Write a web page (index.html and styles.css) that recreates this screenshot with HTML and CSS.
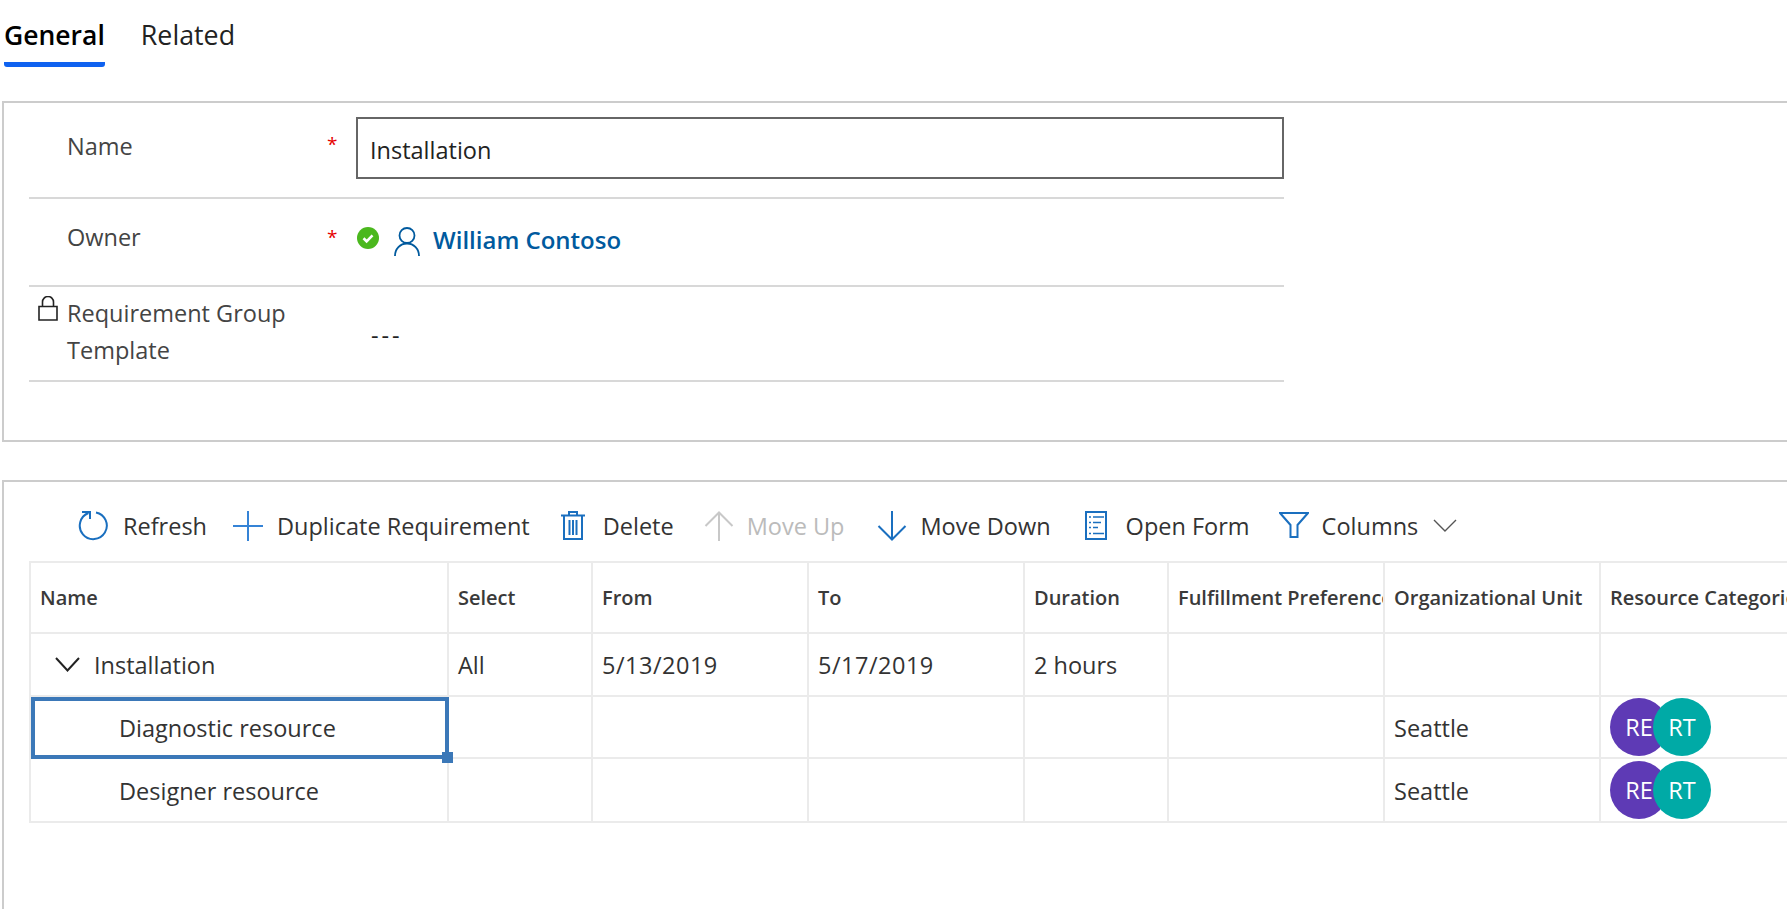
FILE: index.html
```html
<!DOCTYPE html>
<html lang="en">
<head>
<meta charset="utf-8">
<title>Requirement Group</title>
<link rel="stylesheet" href="styles.css">
</head>
<body>
<nav class="tabs">
  <a class="tab tab-active">General</a>
  <a class="tab">Related</a>
</nav>

<section class="panel panel-form">
  <div class="form-row row-name">
    <span class="lock-cell"></span>
    <label class="label">Name</label>
    <span class="req">*</span>
    <div class="input">Installation</div>
  </div>
  <div class="form-row row-owner">
    <span class="lock-cell"></span>
    <label class="label">Owner</label>
    <span class="req">*</span>
    <div class="owner">
      <svg class="ic-status" viewBox="0 0 22 22"><circle cx="11" cy="11" r="11" fill="#4bb81e"/><path d="M6.500 11.300l3.100 3 5.900-6" fill="none" stroke="#fff" stroke-width="2.600"/></svg>
      <svg class="ic-person" viewBox="0 0 26 29"><circle cx="13" cy="8.500" r="7.500" fill="none" stroke="#005a9e" stroke-width="1.800"/><path d="M1 29c0-7 5-12.500 12-12.500S25 22 25 29" fill="none" stroke="#005a9e" stroke-width="1.800"/></svg>
      <a class="owner-link">William Contoso</a>
    </div>
  </div>
  <div class="form-row row-template">
    <span class="lock-cell">
      <svg class="ic-lock" viewBox="0 0 20 25"><path d="M1 10.500h18V24H1zM4.500 10.500V6a5.500 5.500 0 0 1 11 0v4.500" fill="none" stroke="#222" stroke-width="1.600"/></svg>
    </span>
    <label class="label">Requirement Group<br>Template</label>
    <span class="req"></span>
    <div class="empty-value">---</div>
  </div>
</section>

<section class="panel panel-grid">
  <div class="toolbar">
    <button class="cmd cmd-refresh">
      <svg class="ic ic-30" viewBox="0 0 30 30"><path d="M18 1.400A13.500 13.500 0 1 1 10.500 2" fill="none" stroke="#1a6fbf" stroke-width="2"/><path d="M4 1h8v7" fill="none" stroke="#1a6fbf" stroke-width="2"/></svg>
      <span>Refresh</span>
    </button>
    <button class="cmd cmd-dup">
      <svg class="ic ic-30" viewBox="0 0 30 30"><path d="M15 0v30M0 15h30" fill="none" stroke="#3583d6" stroke-width="2"/></svg>
      <span>Duplicate Requirement</span>
    </button>
    <button class="cmd cmd-del">
      <svg class="ic ic-24" viewBox="0 0 24 30"><path d="M0 4.500h24M8 4.500V1h8v3.500M3 4.500V28h18V4.500M8.500 9v15M12 9v15M15.500 9v15" fill="none" stroke="#1a6fbf" stroke-width="2"/></svg>
      <span>Delete</span>
    </button>
    <button class="cmd cmd-off">
      <svg class="ic ic-30" viewBox="0 0 30 30"><path d="M15 30V1.500M1.500 15L15 1.500 28.500 15" fill="none" stroke="#c8c8c8" stroke-width="2"/></svg>
      <span>Move Up</span>
    </button>
    <button class="cmd cmd-down">
      <svg class="ic ic-30" viewBox="0 0 30 30"><path d="M15 0v28.500M1.500 15L15 28.500 28.500 15" fill="none" stroke="#1a6fbf" stroke-width="2"/></svg>
      <span>Move Down</span>
    </button>
    <button class="cmd cmd-form">
      <svg class="ic ic-22" viewBox="0 0 22 30"><path d="M1 1h20v27H1z" fill="none" stroke="#1a6fbf" stroke-width="2"/><path d="M4 6h2M8 6h11M4 11.500h2M8 11.500h8M4 16.500h2M8 16.500h5M4 22.500h2M8 22.500h11" fill="none" stroke="#1a6fbf" stroke-width="1.500"/></svg>
      <span>Open Form</span>
    </button>
    <button class="cmd cmd-cols">
      <svg class="ic ic-30" viewBox="0 0 30 30"><path d="M1 2h28L18.500 14v12h-7V14z" fill="none" stroke="#1a6fbf" stroke-width="2"/></svg>
      <span>Columns</span>
      <svg class="ic-caret" viewBox="0 0 24 14"><path d="M1 1l11 11L23 1" fill="none" stroke="#555" stroke-width="1.400"/></svg>
    </button>
  </div>

  <div class="grid" role="table">
    <div class="cell head">Name</div>
    <div class="cell head">Select</div>
    <div class="cell head">From</div>
    <div class="cell head">To</div>
    <div class="cell head">Duration</div>
    <div class="cell head clip">Fulfillment Preferences</div>
    <div class="cell head">Organizational Unit</div>
    <div class="cell head clip">Resource Categories</div>

    <div class="cell parent">
      <svg class="ic-chev" viewBox="0 0 25 15"><path d="M1 1l11.500 12.500L24 1" fill="none" stroke="#222" stroke-width="2"/></svg>
      Installation
    </div>
    <div class="cell">All</div>
    <div class="cell date">5/13/2019</div>
    <div class="cell date">5/17/2019</div>
    <div class="cell">2 hours</div>
    <div class="cell"></div>
    <div class="cell"></div>
    <div class="cell"></div>

    <div class="cell child selected">Diagnostic resource<i class="handle"></i></div>
    <div class="cell"></div>
    <div class="cell"></div>
    <div class="cell"></div>
    <div class="cell"></div>
    <div class="cell"></div>
    <div class="cell lower">Seattle</div>
    <div class="cell avatars"><span class="av av-re">RE</span><span class="av av-rt">RT</span></div>

    <div class="cell child">Designer resource</div>
    <div class="cell"></div>
    <div class="cell"></div>
    <div class="cell"></div>
    <div class="cell"></div>
    <div class="cell"></div>
    <div class="cell lower">Seattle</div>
    <div class="cell avatars"><span class="av av-re">RE</span><span class="av av-rt">RT</span></div>
  </div>
</section>
</body>
</html>
```
FILE: styles.css
```css
* { box-sizing: border-box; }
html, body { height: 100%; }
body {
  margin: 0;
  overflow: hidden;
  background: #fff;
  color: #333;
  font-family: "Open Sans", "Liberation Sans", sans-serif;
  font-size: 23.5px;
}
.tabs { display: flex; gap: 36px; height: 101px; padding-left: 4px; }
.tab { display: block; height: 67px; padding-top: 13px; font-size: 26.800px; line-height: 44px; color: #222; }
.tab-active { font-size: 26.500px; font-weight: 600; color: #000; border-bottom: 5px solid #0f62f0; border-radius: 0 0 3px 3px; }

.panel { margin-left: 2px; border: 2px solid #ccc; border-right: 0; }
.panel-form { height: 341px; padding-left: 25px; }
.form-row {
  display: grid;
  grid-template-columns: 38px 260px 29px 928px;
  width: 1255px;
  border-bottom: 2px solid #d8d8d8;
}
.row-name { height: 96px; padding-top: 14px; }
.row-owner { height: 88px; padding-top: 20px; }
.row-template { height: 95px; padding-top: 8px; }
.label { line-height: 37px; color: #444; }
.row-name .label { padding-top: 11px; }
.req { color: #e60000; font-size: 19px; line-height: 37px; padding-top: 9px; }
.row-owner .req { padding-top: 0; }
.input {
  height: 62px;
  border: 2px solid #666;
  padding-left: 12px;
  line-height: 62px;
  color: #222;
}
.owner { display: flex; align-items: flex-start; }
.ic-status { width: 22px; height: 22px; margin: 8px 15px 0 1px; }
.ic-person { width: 26px; height: 29px; margin: 8px 13px 0 0; }
.owner-link { color: #005a9e; font-weight: 600; font-size: 24px; line-height: 42px; }
.ic-lock { display: block; width: 20px; height: 25px; margin: 1px 0 0 9px; }
.empty-value { padding: 22px 0 0 15px; line-height: 37px; color: #222; letter-spacing: 3px; }

.panel-grid { height: 440px; margin-top: 38px; padding-left: 25px; }
.toolbar { display: flex; align-items: center; gap: 29px; height: 79px; padding: 8px 0 0 49px; }
.cmd {
  display: flex; align-items: center; gap: 14px;
  padding: 0; border: 0; background: none;
  font: inherit; color: #333; white-space: nowrap;
}
.cmd-refresh { gap: 15px; }
.cmd-dup { gap: 14px; margin-left: -3px; }
.cmd-del { gap: 18px; margin-left: 2px; }
.cmd-off { gap: 13px; margin-left: 1px; color: #bbb; }
.cmd-down { gap: 13px; margin-left: 4px; }
.cmd-form { gap: 19px; margin-left: 5px; }
.cmd-cols { gap: 13px; }
.ic { display: block; height: 30px; }
.ic-30 { width: 30px; }
.ic-24 { width: 24px; }
.ic-22 { width: 22px; }
.ic-caret { width: 24px; height: 14px; margin-left: 2px; }

.grid {
  display: grid;
  grid-template-columns: 418px 144px 216px 216px 144px 216px 216px 1fr;
  grid-template-rows: 71px 63px 62px 64px;
  width: 1800px;
  border-top: 2px solid #ebebeb;
  border-left: 2px solid #ebebeb;
}
.cell {
  position: relative;
  display: flex;
  align-items: center;
  padding: 0 0 0 9px;
  border-right: 2px solid #ebebeb;
  border-bottom: 2px solid #ebebeb;
  white-space: nowrap;
  overflow: hidden;
}
.head { font-size: 20px; font-weight: 600; color: #3a3a3a; }
.parent { padding-left: 24px; }
.date { letter-spacing: 0.5px; }
.ic-chev { width: 25px; height: 15px; margin-right: 14px; flex: none; }
.child { padding-left: 88px; padding-top: 2px; }
.lower { padding-top: 2px; }
.selected { z-index: 1; overflow: visible; outline: 4px solid #3b78b8; outline-offset: -4px; }
.handle { position: absolute; right: -6px; bottom: -6px; width: 11px; height: 11px; background: #3b78b8; }
.av {
  display: flex; align-items: center; justify-content: center;
  flex: none; width: 58px; height: 58px; border-radius: 50%;
  color: #fff;
}
.av-re { background: #5e3ab5; }
.av-rt { background: #00aaa6; margin-left: -15px; }
```
